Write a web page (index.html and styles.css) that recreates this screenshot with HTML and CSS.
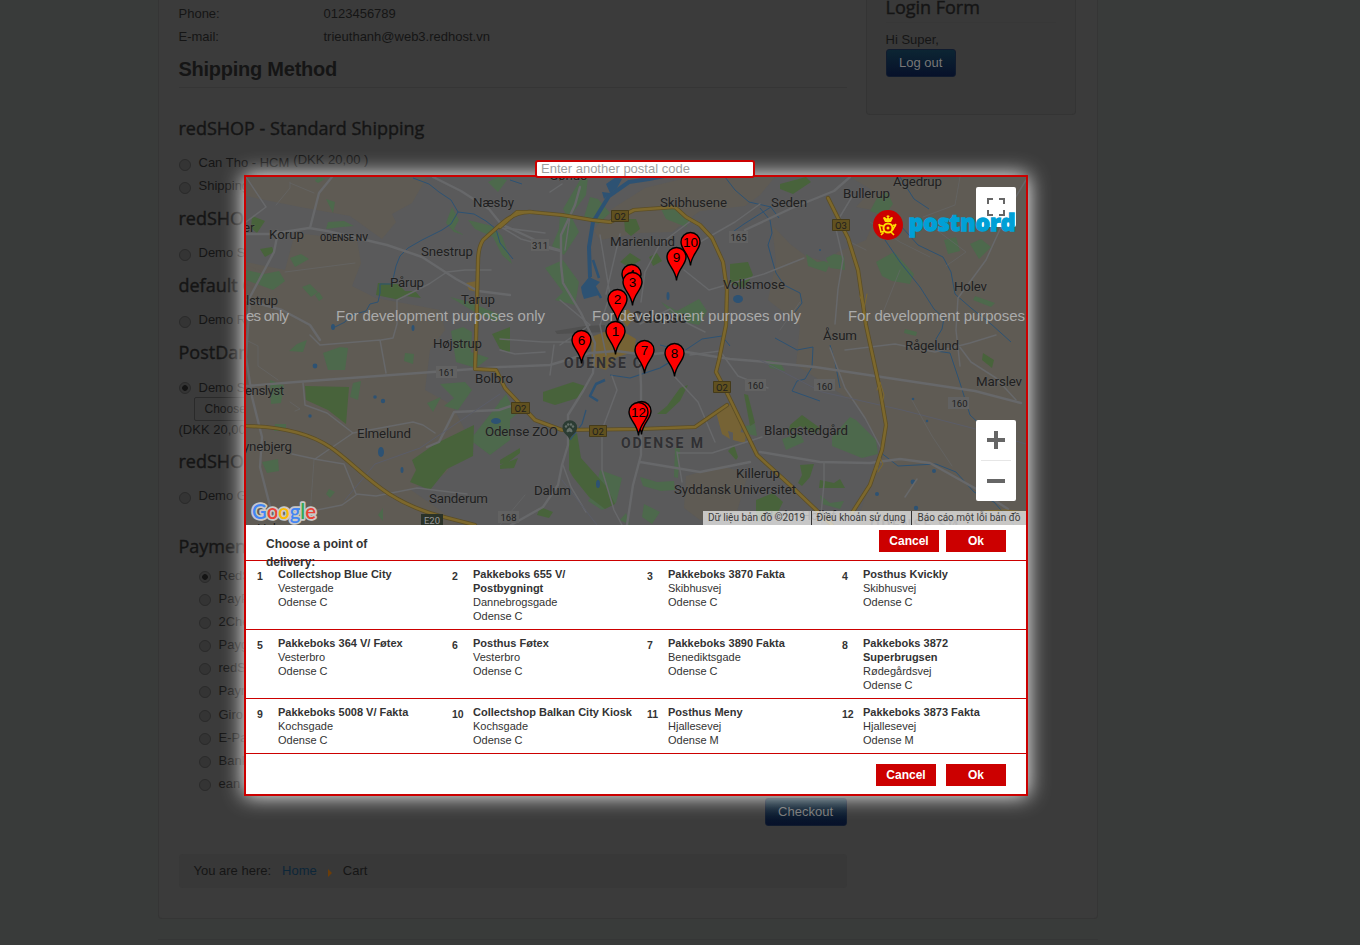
FILE: index.html
```
<!DOCTYPE html>
<html lang="en">
<head>
<meta charset="utf-8">
<title>Cart</title>
<link rel="stylesheet" href="styles.css">
</head>
<body>
<div class="page">
  <div class="card">
    <main class="content">
      <div class="field"><span class="field-name">Phone:</span><span>0123456789</span></div>
      <div class="field"><span class="field-name">E-mail:</span><span>trieuthanh@web3.redhost.vn</span></div>
      <h2 class="section-title">Shipping Method</h2>
      <h3 class="group first">redSHOP - Standard Shipping</h3>
      <div class="option"><i class="radio"></i>Can Tho - HCM <span class="price">(DKK 20,00 )</span></div>
      <div class="option"><i class="radio"></i>Shipping</div>
      <h3 class="group">redSHO</h3>
      <div class="option"><i class="radio"></i>Demo S</div>
      <h3 class="group">default G</h3>
      <div class="option"><i class="radio"></i>Demo R</div>
      <h3 class="group">PostDan</h3>
      <div class="option short"><i class="radio on"></i>Demo S</div>
      <div class="choose">Choose</div>
      <div class="cost">(DKK 20,00</div>
      <h3 class="group">redSHO</h3>
      <div class="option"><i class="radio"></i>Demo G</div>
      <h3 class="group payment">Paymen</h3>
      <div class="payments">
        <div class="option"><i class="radio on"></i>RedS</div>
        <div class="option"><i class="radio"></i>PayP</div>
        <div class="option"><i class="radio"></i>2Che</div>
        <div class="option"><i class="radio"></i>Payg</div>
        <div class="option"><i class="radio"></i>redS</div>
        <div class="option"><i class="radio"></i>Paym</div>
        <div class="option"><i class="radio"></i>Giro</div>
        <div class="option"><i class="radio"></i>E-Pa</div>
        <div class="option"><i class="radio"></i>Bank</div>
        <div class="option"><i class="radio"></i>ean</div>
      </div>
      <div class="checkout-row"><span class="button">Checkout</span></div>
      <nav class="crumbs"><span>You are here:</span><a class="home">Home</a><i class="arrow"></i><span>Cart</span></nav>
    </main>
    <aside class="login">
      <h3 class="login-title">Login Form</h3>
      <div class="greeting">Hi Super,</div>
      <span class="button">Log out</span>
    </aside>
  </div>
  <div class="page-rule"></div>
</div>

<section class="modal">
  <div class="postal">Enter another postal code</div>
  <svg class="map" viewBox="246 177 780 348" width="780" height="348">
    <defs>
      <path id="pin" d="M0 23.5C-1 12-9.5 8-9.5 0a9.5 9.5 0 0 1 19 0C9.5 8 1 12 0 23.5z" fill="#f00" stroke="#000" stroke-width="1.4"/>
    </defs>
    <rect x="246" y="177" width="780" height="348" fill="#5f5b54"/>
    <!-- built-up area -->
    <path fill="#5a5a5b" d="M246 196L300 207 350 216 382 239 396 222 392 214 412 203 427 177H850L872 190 856 207 878 211 866 240 838 252 826 262 806 256 790 244 772 225 776 262 768 300 800 325 796 365 827 385 855 403 885 452 868 488 856 525H458L440 510 411 490 445 474 470 440 452 405 425 390 430 350 445 330 440 310 376 298 352 286 361 263 357 240 295 233 285 270 246 262z"/>
    <path fill="#5f5b54" d="M604 214L645 188 690 177H775L760 195 745 206 700 211 672 232 640 233 600 240 594 231zM686 476L722 466 748 474 736 515 700 520 684 508zM246 265L268 274 257 290 246 284z"/>
    <!-- parks -->
    <g fill="#4d694c">
      <path d="M325 179l-7 4-3-2 3-4zM326 199l9 3-2 11zM328 222l16-1 10 5-12 1-16 2zM246 270l18 4 15-3 6 10-12 9-16-6-11-4zM290 258l11-4 8 5-14 8zM302 287l8-3 8 8-7 5zM315 295l4-3 4 6-4 3zM452 207l7 13-5 9 10 6-10-3-8-9zM468 220l24 6 10 10 10 28-10-9-9-18-18-8zM450 297l20 5 30 13-3 7-24-11zM451 331l12-4 9 5-1 20 18 6-13 10-20-6zM488 182l10-5 9 3-9 12zM580 180l8-3-2 18-9 12-8 12-6-10zM590 197l8 2 12 14-12 11-14-7zM560 215l8-5 11 22-15 23-12-9 7-17zM545 268l18-8 16 22-4 23-20-5 8-8zM660 207l20 2 10 10-4 8-20-8zM661 302l16 9 22-12 8 12-8 14-20-4zM806 254l11 8 7-1 6 3-4 8-18-6zM826 258l8-4 10 2 1 14-15-2zM876 262l18-10 20 22-4 10-18-3-10-5zM877 198l10-6 6 12-9 12-14-5zM944 240l12-3 4 14-12 3zM970 244l11-5 10 8-12 12zM975 296l20 7-4 4-18-7zM905 329l12 3-1 4-12-3zM323 353l17-6 8 1-3 22-17 0zM297 344l10-4-4 12-14-1zM405 353l9 1-1 10-9-3zM353 383l8-2-3 19-8-3zM427 403l14-6-8 15zM270 380l14 5-3 18-10 1zM275 424l11 0 0 7-12 0zM262 462l16-3 1 12-12 2zM329 489l6 3-5 6-4-4zM378 515l5-7v13z"/>
      <path d="M470 440L506 394 510 402 510 440 490 455zM440 384l25-2 7 8-14 20-14-4 10-8zM500 400l12 4 5 10-10 8-10-8zM600 470l22 8-6 25-14 7-14-9 7-10zM640 477l17 5 17-1 1 9-14 1-18-5zM644 504l16 8-8 12-10-7zM620 520l6-7 4 12zM675 448l5 0-2 30-4-1zM832 437l18-20 6 3 20 20 2 14-16 4-30-12zM782 439l18-6 4 9-18 8zM745 426l10-2 2 12-10-2zM820 495l10 8 14-2-4 8-18-5zM766 360l14 2 5 9-15-3z"/>
    </g>
    <g fill="#48633b">
      <path d="M252 216l13 5-8 12-6-5zM260 249l12-2 2 5-9 5zM378 283l20 1 10 10-8 6-24-5zM404 291l11 0 6 7-16-2zM305 386l44 1-3 37-18-14-22-10zM412 460L435 444 474 425 473 456 447 469 430 490 410 482 416 470zM492 334l18-7 0 26-10-4zM624 219l12 0 4 10-9 7-6-5zM620 262l10-9 11 7-12 7zM649 257l8-4 5 8-9 5zM730 264l18-2 5 13-9 13-14-4zM780 184l26-7 5 5-18 12-13-5zM543 392l30-10 12 4-4 11-26 8-12-4zM569 438l8-5 4 25 25 28 9 18-10 5-16-12-16-20-4-7zM680 388l8-3-8 16-14 13-9 0 10-8zM500 460l20-12 0 5-13 10-7 1zM500 465l18-7-4 10-14 1zM540 507l13 5-4 6-12-3zM744 394l4 1 7 28-5 3zM790 425l12-10 18 13-5 6-15-8-12 8zM800 465l14-1-4 13-8 9-4-3 4-8zM820 480l14 3 6-4 5 9-26 0zM756 500l17-7 10 9-7 14-20 6zM728 451l6-6 4 12-2 3zM983 353l11 7-2 8-10-8z"/>
    </g>
    <!-- industrial and airport areas -->
    <path fill="#7b652f" opacity=".85" d="M591 337l16-6 10 9 7-8 12 7-2 13-17 5-11 13-14-4zM716 412l16-8 10 22-2 9-12-4 2 8-8-5zM733 431l13 2-1 10-12-3zM466 283l11-2v11l-8-2zM619 315l9-6 6 8-7 10z"/>
    <path fill="#505050" d="M555 331l30-5 20-1v7l-48 2z"/>
    <!-- water -->
    <g fill="none" stroke="#2d5273" stroke-linejoin="round">
      <path stroke-width="1" d="M413 178l16 6 10 8 12 8 7 12-7 12-9 6-20 10-14 8-8 8-4 10-4 18-12 0v9l-2 9-8 2-4 7-17 5-4 6-10 5M458 212l16 2 12 7 10 8 4 14 13 16M770 206l9 12M771 207l-22-5-14-12-10-13M771 207l-27 17-10 7M760 208l10 12 2 13-4 12 5 18 3 10 8 12 16 8 2 10-7 9M775 338l22 12 16-3-1 20-7 12-8 2-5 10 28 10M885 240l15 22 20 25 14 22 10 9-2 11-6 10 0 12 14 2 10 30 10 32 15 14M900 225l18 20 25 12 8 15 4 22 16 14 20 16 20 18M900 177l14 22 15 10M880 452l18 14 38-2 20 8 18 20 20 10 20 23M660 345l24 6 18-12 20-3 8 10M510 180l12 4M830 345l5 17 5 26"/>
      <path stroke-width="4" d="M590 277l-1-30 4-25 16-26 20-14 20-3 20-4 20-5"/>
      <path stroke-width="2.500" d="M589 277l7 12 5 9M593 260l6 18M605 380l-9 4-6 12 8 5"/>
      <path stroke-width="1.200" d="M610 375l20 3 30-10 15-9M586 410l-4 14-12 16"/>
    </g>
    <g fill="#2d5273">
      <path d="M581 287l8-10 11 5-5 5 4 8-15 4-2-6zM606 184l10-7 6 2-5 9-7 5zM602 192l8 1-6 6z"/>
      <circle cx="315" cy="366" r="2.4"/><circle cx="310" cy="416" r="1.700"/><circle cx="375" cy="397" r="1.800"/><circle cx="383" cy="401" r="2.2"/><ellipse cx="381" cy="452" rx="3" ry="5"/><ellipse cx="402" cy="470" rx="1.5" ry="3"/><ellipse cx="496" cy="421" rx="5" ry="3"/><ellipse cx="333" cy="327" rx="2" ry="3"/><ellipse cx="413" cy="328" rx="1.5" ry="3"/><ellipse cx="738" cy="299" rx="5" ry="4"/><ellipse cx="668" cy="296" rx="1.500" ry="4"/><ellipse cx="598" cy="484" rx="2" ry="4"/><circle cx="877" cy="494" r="2"/><circle cx="913" cy="482" r="2.4"/><circle cx="934" cy="471" r="2"/><circle cx="916" cy="508" r="2.2"/><circle cx="913" cy="399" r="1.3"/><circle cx="927" cy="421" r="1.3"/><circle cx="820" cy="250" r="1"/>
    </g>
    <!-- minor roads -->
    <g fill="none" stroke="#67686a" stroke-linejoin="round" stroke-linecap="round">
      <path stroke-width="2.4" d="M246 234l25 0 38-6 18 3 60 14 35 12 34 22 22 12 32 4M433 177l28 14 28 18 12 15 30 14 18 10 12 3M246 386l50-4 150-11 54-4 50-2 40-12 26-2 30 4 34-4 50 8 25 2 60 6 40 6 60 9 60 9 46 12M427 447l12-5 15-30 45-2 12-4M511 525l32-18 15-22 4-20 6-20 0-30 15-24 10-18 2-30-14-30-18-30-2-18 0-30 14-30 5-18M627 525l6-40 8-30 0-70-2-40M745 230l47-22 42-17 16-14M760 452l60 10 50 1 30-4 30 4 50 28 28 18M640 462l60 10 50-10M310 228l9-35 13-16M278 232l-4 20-24 45-4 60 6 40 10 40-2 30 12 47M246 300l36 10 28 15 10 15"/>
      <path stroke-width="1.500" d="M303 383l2 22 22 8 26 20-38 26-23-5M353 433l60-11 10 3 12 8M314 459l30 5 12 30 20 2 41-8 50 6M356 495l-14 10-30 6-30 4M310 335l10 10 60-5 6 33M381 340l12-2 4-14v-24l32-16 18-12 18-2 26 0M246 177l20 30-20 15M545 233l-40-5M501 227l20 12 40 11M565 250l5-34M550 192l12-8M600 235l10 60-10 30 6 30M620 234l-14 60M692 220l-32 24-15 28-4 30M680 262l20-20 35-20 25-18M684 270l25 20 55-16 40-16M690 355l30-4 18 25 30 12M674 376l24 26 17 40M677 452l5 30M678 453h34l50-16M560 300l30 25-30 20M640 324l30-15 15 13 20 10M583 342l-40 0-43-3M500 350l15 4 30-2M550 375l4-30M830 348l15 40 20 30 18 34M820 525l4-42 0-21M853 195l-18 30 8 34-5 30-3 35M1026 180l-15 25-25 55-28 38-2 32 4 36M845 350l50-6 40 8 35-9 26-8M956 342l15 20 25 16 20 22M905 497l12-18M612 376l5 14-15 40 0 40 12 40 8 15M563 465l8 22 15 25"/>
      <path stroke="#5b5d68" stroke-width="1" d="M345 500l30-36 45-16 80-54M760 360l62 32 80 18 70 18 54 16M562 480l35 45"/>
      <path stroke-width=".6" d="M276 205l14-17 0-6M290 183l24 10M960 177l-5 28-32 12M246 340l12 6 0 20 20 14M285 272l70-9M290 402l10 7-5 2M310 516l4-56M870 222l30 20 30 15M846 240l20 10M900 270l-20 50M946 266l20-14-40-30M912 400l20 36 20 30M780 330l20-28M500 525l25-30"/>
    </g>
    <!-- motorways -->
    <g fill="none" stroke-linejoin="round" stroke-linecap="round">
      <g stroke="#5c4e26" stroke-width="4.2">
        <path d="M500 227L517 212 530 212 562 215 592 220 610 222 634 210 675 207 686 217 700 225 712 238 723 262 727 290 726 325 719 360 716 372 727 393 757 455 790 485 832 525"/>
        <path d="M532 212Q516 211 501 224L483 240Q478 248 478 262L476 340 475 369 496 370 505 388 535 420 562 430 640 429 695 427 727 405"/>
        <path d="M246 426Q300 427 330 447C360 467 380 500 440 516L475 525M828 198L848 238 858 270 866 325 880 390 886 425 882 450 870 485 852 513"/>
      </g>
      <g stroke="#7d682c" stroke-width="2.6">
        <path d="M500 227L517 212 530 212 562 215 592 220 610 222 634 210 675 207 686 217 700 225 712 238 723 262 727 290 726 325 719 360 716 372 727 393 757 455 790 485 832 525"/>
        <path d="M532 212Q516 211 501 224L483 240Q478 248 478 262L476 340 475 369 496 370 505 388 535 420 562 430 640 429 695 427 727 405"/>
        <path d="M246 426Q300 427 330 447C360 467 380 500 440 516L475 525M828 198L848 238 858 270 866 325 880 390 886 425 882 450 870 485 852 513"/>
      </g>
      <path stroke="#7d682c" d="M860 296l4 12 3-14M877 390l3-8 4 13-2 9M877 470l3-12 3 6-5 8M985 511l20-1 21 2"/>
    </g>
    <!-- road shields -->
    <g class="shields">
      <g fill="#61511f" stroke="#453b1a"><path d="M611.5 210.500h17v11h-17zM832.500 219.500h17v11h-17zM713.500 381.500h17v11h-17zM511.500 402.500h18v11h-18zM589.500 425.500h17v11h-17z"/></g>
      <path fill="#626262" d="M531 239h18v12h-18zM729 231h19v12h-19zM436 366h21v12h-21zM745 379h21v12h-21zM814 379h21v12h-21zM948 397h21v12h-21zM498 511h21v12h-21z"/>
      <path fill="#2b3328" d="M421 514h22v11h-22z"/>
      <g text-anchor="middle" fill="#1e1e1e"><text x="620" y="219.500">O2</text><text x="841" y="228.500">O3</text><text x="722" y="390.500">O2</text><text x="520.500" y="411.500">O2</text><text x="598" y="434.500">O2</text><text x="540" y="248.500">311</text><text x="738.500" y="240.500">165</text><text x="446.500" y="375.500">161</text><text x="755.500" y="388.500">160</text><text x="824.500" y="389.500">160</text><text x="959.500" y="406.500">160</text><text x="508.500" y="520.500">168</text><text x="432" y="523.500" fill="#999">E20</text></g>
    </g>
    <!-- place names -->
    <g class="places">
      <text x="550" y="180" textLength="37">Søhus</text>
      <text x="473" y="207" textLength="41">Næsby</text>
      <text x="243" y="232">er</text>
      <text x="269" y="239" textLength="35">Korup</text>
      <text x="421" y="256" textLength="52">Snestrup</text>
      <text x="390" y="287" textLength="34">Pårup</text>
      <text x="461" y="304" textLength="34">Tarup</text>
      <text x="246" y="305" textLength="32">lstrup</text>
      <text x="433" y="348" textLength="49">Højstrup</text>
      <text x="475" y="383" textLength="38">Bolbro</text>
      <text x="245" y="395" textLength="39">enslyst</text>
      <text x="357" y="438" textLength="54">Elmelund</text>
      <text x="243" y="451" textLength="49">ynebjerg</text>
      <text x="485" y="436" textLength="73">Odense ZOO</text>
      <text x="429" y="503" textLength="59">Sanderum</text>
      <text x="534" y="495" textLength="37">Dalum</text>
      <text x="257" y="532.500" textLength="44">Holmstr</text>
      <text x="660" y="207" textLength="67">Skibhusene</text>
      <text x="610" y="246" textLength="65">Marienlund</text>
      <text x="771" y="207" textLength="36">Seden</text>
      <text x="843" y="198" textLength="47">Bullerup</text>
      <text x="893" y="186" textLength="49">Agedrup</text>
      <text x="723" y="289" textLength="62">Vollsmose</text>
      <text x="954" y="291" textLength="33">Holev</text>
      <text x="823" y="340" textLength="34">Åsum</text>
      <text x="905" y="350" textLength="54">Rågelund</text>
      <text x="976" y="386" textLength="46">Marslev</text>
      <text x="764" y="435" textLength="84">Blangstedgård</text>
      <text x="736" y="478" textLength="44">Killerup</text>
      <text x="674" y="494" textLength="122">Syddansk Universitet</text>
      <text x="764" y="520" textLength="72">Neder Holluf</text>
      <text x="320" y="241" textLength="48" class="district">ODENSE NV</text>
      <text x="564" y="368" textLength="78" class="area">ODENSE C</text>
      <text x="621" y="448" textLength="82" class="area">ODENSE M</text>
      <text x="632" y="323" textLength="55" class="city">Odense</text>
      <text x="870" y="530" textLength="88" class="area">ODENSE SØ</text>
    </g>
    <path fill="#2b3c33" d="M569.500 440c-1-5-7-6-7-12.500a7.300 7.300 0 0 1 14.600 0c0 6.500-6.600 7.500-7.600 12.500z"/>
    <g fill="#657069"><circle cx="566" cy="426.500" r="1.200"/><circle cx="568.200" cy="424.500" r="1.200"/><circle cx="571" cy="424.500" r="1.200"/><circle cx="573" cy="426.500" r="1.200"/><path d="M566.500 431q0-2 3-3.500 3 1.500 3 3.500t-3 .6q-3 1.500-3-.6z"/></g>
    <!-- development watermark -->
    <g class="watermark">
      <text x="246" y="320.500" textLength="43">es only</text>
      <text x="336" y="320.500" textLength="209">For development purposes only</text>
      <text x="592" y="320.500" textLength="209">For development purposes only</text>
      <text x="848" y="320.500" textLength="177">For development purposes</text>
    </g>
    <!-- delivery points -->
    <g class="pins">
      <use href="#pin" x="690.500" y="242"/><text x="690.500" y="247">10</text>
      <use href="#pin" x="676.500" y="257"/><text x="676.500" y="262">9</text>
      <use href="#pin" x="631.500" y="274"/><text x="631.500" y="279">4</text>
      <use href="#pin" x="632.500" y="282"/><text x="632.500" y="287">3</text>
      <use href="#pin" x="617.500" y="299"/><text x="617.500" y="304">2</text>
      <use href="#pin" x="615.500" y="331"/><text x="615.500" y="336">1</text>
      <use href="#pin" x="581.500" y="340"/><text x="581.500" y="345">6</text>
      <use href="#pin" x="644.500" y="350"/><text x="644.500" y="355">7</text>
      <use href="#pin" x="674.500" y="353"/><text x="674.500" y="358">8</text>
      <use href="#pin" x="641.500" y="411"/><text x="641.500" y="416">11</text>
      <use href="#pin" x="638.500" y="412"/><text x="638.500" y="417">12</text>
    </g>
    <!-- map controls -->
    <g>
      <rect x="976" y="187" width="40" height="40" rx="2" fill="#fff"/>
      <path d="M988 204v-5h5M999 199h5v5M1004 210v5h-5M993 215h-5v-5" fill="none" stroke="#666" stroke-width="2"/>
      <rect x="976" y="420" width="40" height="81" rx="2" fill="#fff"/>
      <path d="M987 440h18M996 431v18M987 481h18" stroke="#666" stroke-width="4"/>
      <path d="M981 460.500h30" stroke="#e6e6e6"/>
    </g>
    <g>
      <circle cx="888" cy="225" r="15" fill="#c00"/>
      <g fill="none" stroke="#ffdf00">
        <circle cx="888" cy="228" r="4.500" stroke-width="2"/>
        <path stroke-width="1.600" d="M879 225l4 1M879 224l2 8 4-1M892 231l4-7M891 232l3 3M884 232l-3 3M893 225l3 1"/>
      </g>
      <circle cx="888" cy="228" r="1.500" fill="#ffdf00"/>
      <path fill="#ffdf00" d="M885 222l-2-4q1-2 3 0l.8.5.7-1.500-1.300-.6 1-1.200.8.500.8-.5 1 1.200-1.300.6.700 1.500.8-.5q2-2 3 0l-2 4z"/>
      <text class="postnord" x="908.500" y="231" textLength="107" lengthAdjust="spacingAndGlyphs">postnord</text>
    </g>
    <g class="google">
      <text x="252" y="519" textLength="64" lengthAdjust="spacingAndGlyphs"><tspan fill="#4285f4">G</tspan><tspan fill="#ea4335">o</tspan><tspan fill="#fbbc05">o</tspan><tspan fill="#4285f4">g</tspan><tspan fill="#34a853">l</tspan><tspan fill="#ea4335">e</tspan></text>
    </g>
    <!-- attribution -->
    <rect x="703" y="511" width="323" height="14" fill="#f5f5f5" opacity=".7"/>
    <path d="M811.500 511v14M911.500 511v14" stroke="#333"/>
    <g class="credits"><text x="708" y="521" textLength="97">Dữ liệu bản đồ ©2019</text><text x="816.500" y="521" textLength="89">Điều khoản sử dụng</text><text x="917.500" y="521" textLength="103">Báo cáo một lỗi bản đồ</text></g>
  </svg>
  <header class="bar">
    <div class="prompt">Choose a point of delivery:</div>
    <div class="actions"><span class="action">Cancel</span><span class="action">Ok</span></div>
  </header>
  <div class="row">
    <div class="point"><b class="num">1</b><div><b>Collectshop Blue City</b><br>Vestergade<br>Odense C</div></div>
    <div class="point"><b class="num">2</b><div><b>Pakkeboks 655 V/<br>Postbygningt</b><br>Dannebrogsgade<br>Odense C</div></div>
    <div class="point"><b class="num">3</b><div><b>Pakkeboks 3870 Fakta</b><br>Skibhusvej<br>Odense C</div></div>
    <div class="point"><b class="num">4</b><div><b>Posthus Kvickly</b><br>Skibhusvej<br>Odense C</div></div>
  </div>
  <div class="row">
    <div class="point"><b class="num">5</b><div><b>Pakkeboks 364 V/ Føtex</b><br>Vesterbro<br>Odense C</div></div>
    <div class="point"><b class="num">6</b><div><b>Posthus Føtex</b><br>Vesterbro<br>Odense C</div></div>
    <div class="point"><b class="num">7</b><div><b>Pakkeboks 3890 Fakta</b><br>Benediktsgade<br>Odense C</div></div>
    <div class="point"><b class="num">8</b><div><b>Pakkeboks 3872<br>Superbrugsen</b><br>Rødegårdsvej<br>Odense C</div></div>
  </div>
  <div class="row">
    <div class="point"><b class="num">9</b><div><b>Pakkeboks 5008 V/ Fakta</b><br>Kochsgade<br>Odense C</div></div>
    <div class="point"><b class="num">10</b><div><b>Collectshop Balkan City Kiosk</b><br>Kochsgade<br>Odense C</div></div>
    <div class="point"><b class="num">11</b><div><b>Posthus Meny</b><br>Hjallesevej<br>Odense M</div></div>
    <div class="point"><b class="num">12</b><div><b>Pakkeboks 3873 Fakta</b><br>Hjallesevej<br>Odense M</div></div>
  </div>
  <footer class="foot"><span class="action">Cancel</span><span class="action">Ok</span></footer>
</section>
</body>
</html>
```
FILE: styles.css
```
* { box-sizing: border-box; }
body {
  margin: 0;
  height: 945px;
  overflow: hidden;
  background: #393b3a;
  color: #151515;
  font: 13px/18px "Liberation Sans", Arial, sans-serif;
}
.page { width: 940px; margin-left: 158px; }
.card {
  display: flex;
  align-items: flex-start;
  gap: 19px;
  height: 919px;
  padding: 2px 20px 0 19.500px;
  background: #3b3b3b;
  border: 1px solid #353535;
  border-top: 0;
  border-radius: 0 0 4px 4px;
}
.page-rule { margin-top: 20px; border-top: 1px solid #353636; }
.content { width: 668px; }
.field { display: flex; height: 23px; line-height: 23px; }
.field-name { width: 145px; }
.section-title {
  height: 40px;
  margin: 0;
  border-bottom: 1px solid #353535;
  font-size: 20px;
  letter-spacing: -.25px;
  line-height: 42px;
}
.group {
  height: 44.500px;
  margin: 0;
  font: 500 18px/41px "Open Sans", sans-serif;
  -webkit-text-stroke: .4px #151515;
  white-space: nowrap;
}
.group.first { height: 64px; line-height: 81px; }
.group.payment { height: 57px; line-height: 77px; }
.option {
  display: flex;
  gap: 7px;
  height: 22.800px;
  line-height: 22.500px;
  white-space: nowrap;
}
.option.short { height: 20px; }
.price { margin: -3px 0 0 -3px; }
.radio {
  flex: none;
  width: 12px;
  height: 12px;
  margin: 7px 1px 0 0;
  border: 1px solid #2a2a2a;
  border-radius: 50%;
  background: #343434;
}
.radio.on { background: radial-gradient(circle, #141414 0 2.500px, #343434 3.200px); }
.short .radio { margin-top: 5px; }
.choose {
  width: 100px;
  height: 24px;
  margin-left: 15px;
  padding-left: 10px;
  border: 1px solid #2a2a2a;
  border-radius: 2px;
  font-size: 12px;
  line-height: 22px;
}
.cost { height: 20px; line-height: 18px; }
.payments { padding-left: 20px; }
.payments .option { height: 23.100px; }
.payments .radio { margin-top: 6px; }
.checkout-row { display: flex; justify-content: flex-end; padding-top: 2px; }
.button {
  display: inline-block;
  height: 28px;
  padding: 0 12.500px;
  border: 1px solid #101b2e;
  border-radius: 3px;
  background: linear-gradient(#0c2533, #07112a);
  color: #777;
  line-height: 26px;
}
.crumbs {
  display: flex;
  align-items: center;
  height: 34px;
  margin-top: 28px;
  padding-left: 15px;
  border-radius: 4px;
  background: #383838;
}
.home { margin: 0 11px; color: #0d2638; }
.arrow {
  width: 4px;
  margin: 4px 11px 0 0;
  border: 4px solid transparent;
  border-left-color: #6b3d09;
  border-right: 0;
}
.login {
  width: 210px;
  height: 115px;
  margin-top: -2px;
  padding: 0 19px;
  border: 1px solid #343434;
  border-top: 0;
  border-radius: 0 0 4px 4px;
  background: #393939;
}
.login-title {
  height: 23px;
  margin: 0 0 7px;
  border-bottom: 1px solid #373737;
  font: 500 18px/15px "Open Sans", sans-serif;
  -webkit-text-stroke: .4px #151515;
}
.greeting { height: 19px; line-height: 19px; }

.modal {
  position: absolute;
  left: 244px;
  top: 175px;
  width: 784px;
  height: 621px;
  border: 2px solid #c00;
  background: #fff;
  box-shadow: 0 0 20px #fff;
  color: #333;
  font-size: 11px;
  line-height: 14px;
}
.postal {
  position: absolute;
  left: 289px;
  top: -17px;
  width: 220px;
  height: 18px;
  padding-left: 4px;
  border: 2px solid #c00;
  border-radius: 3px;
  background: #fff;
  color: #a0a0a0;
  font-size: 13px;
  line-height: 14px;
}
.map { display: block; overflow: hidden; }
.bar {
  display: flex;
  justify-content: space-between;
  height: 36px;
  padding: 5px 20px 0;
  border-bottom: 1px solid #c00;
}
.prompt { width: 130px; padding-top: 5px; font: bold 12px/18px "Liberation Sans", Arial, sans-serif; }
.actions { display: flex; gap: 7px; }
.action {
  width: 60px;
  height: 22px;
  background: #c00;
  color: #fff;
  font: bold 12px/22px "Liberation Sans", Arial, sans-serif;
  text-align: center;
}
.row {
  display: grid;
  grid-template-columns: repeat(4, 195px);
  min-height: 55px;
  padding: 6px 0;
  border-bottom: 1px solid #c00;
}
.point { display: flex; padding-left: 11px; white-space: nowrap; }
.num { width: 21px; padding-top: 2px; font-size: 10.500px; }
.foot { display: flex; justify-content: flex-end; gap: 10px; padding: 10px 20px 0; }

.places text { font: 13.300px Roboto, sans-serif; fill: #202020; stroke: #686868; stroke-width: 1.200px; stroke-opacity: .4; paint-order: stroke; }
.places .district { font: 500 9px Roboto, sans-serif; }
.places .area { font: bold 14px Roboto, sans-serif; fill: #303033; }
.places .city { font: bold 16px Roboto, sans-serif; fill: #292929; }
.shields { font: 9.500px Roboto, sans-serif; }
.watermark { font: 15px "Liberation Sans", Arial, sans-serif; fill: #aaa; }
.pins { font: 13.500px "Liberation Sans", Arial, sans-serif; text-anchor: middle; }
.postnord { font: 800 22px "Open Sans", sans-serif; fill: #00a0d6; stroke: #00a0d6; stroke-width: 1.300px; }
.google { font: 600 21px Lato, sans-serif; stroke: #c8c8c8; stroke-width: 3.500px; stroke-linejoin: round; paint-order: stroke; }
.google tspan { paint-order: stroke; }
.credits { font: 10px Roboto, sans-serif; fill: #3b3b3b; }
```
